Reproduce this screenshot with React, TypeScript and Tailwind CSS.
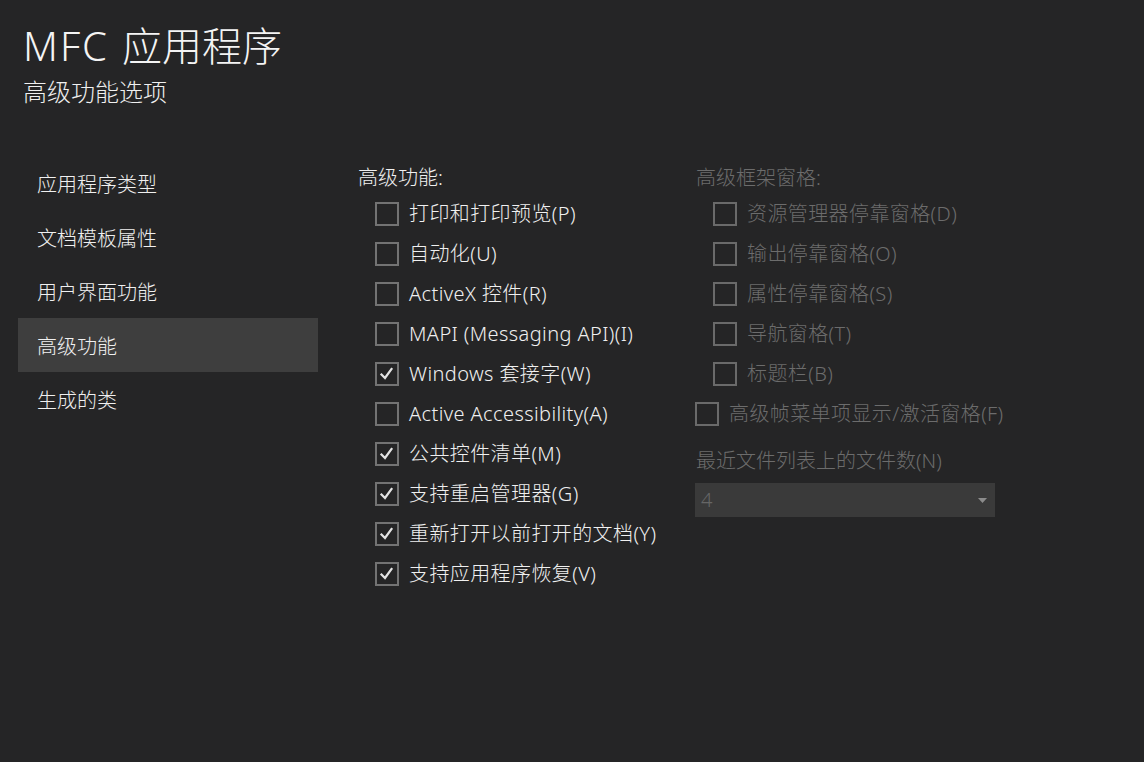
import React from "react";

const font = { fontFamily: '"Noto Sans", "Noto Sans CJK SC", sans-serif' };

function Box({ checked, disabled }: { checked?: boolean; disabled?: boolean }) {
  return (
    <div
      className={`w-[24px] h-[24px] border-2 shrink-0 flex items-center justify-center ${
        disabled ? "border-[#6a6a6a]" : "border-[#737373]"
      }`}
    >
      {checked && (
        <svg width="20" height="20" viewBox="0 0 20 20">
          <path d="M4.5 10.5 L8 14 L14.5 5" fill="none" stroke="#e4e4e4" strokeWidth="2.2" strokeLinecap="square" />
        </svg>
      )}
    </div>
  );
}

function Row({
  label,
  checked,
  disabled,
  indent = true,
}: {
  label: string;
  checked?: boolean;
  disabled?: boolean;
  indent?: boolean;
}) {
  return (
    <div className={`h-[40px] flex items-center ${indent ? "pl-[17px]" : "pl-0"}`}>
      <Box checked={checked} disabled={disabled} />
      <span
        className={`ml-[10px] text-[20px] leading-[24px] whitespace-nowrap tracking-[0.4px] ${
          disabled ? "text-[#6c6c6c]" : "text-[#f0f0f0]"
        }`}
      >
        {label}
      </span>
    </div>
  );
}

export default function App() {
  const nav = ["应用程序类型", "文档模板属性", "用户界面功能", "高级功能", "生成的类"];
  const left: [string, boolean][] = [
    ["打印和打印预览(P)", false],
    ["自动化(U)", false],
    ["ActiveX 控件(R)", false],
    ["MAPI (Messaging API)(I)", false],
    ["Windows 套接字(W)", true],
    ["Active Accessibility(A)", false],
    ["公共控件清单(M)", true],
    ["支持重启管理器(G)", true],
    ["重新打开以前打开的文档(Y)", true],
    ["支持应用程序恢复(V)", true],
  ];
  const right = ["资源管理器停靠窗格(D)", "输出停靠窗格(O)", "属性停靠窗格(S)", "导航窗格(T)", "标题栏(B)"];
  return (
    <div className="w-[1144px] h-[762px] bg-[#252526] text-[#f0f0f0] overflow-hidden font-light" style={font}>
      <div className="pt-[20px] pl-[23px]">
        <div className="text-[40px] leading-[52px] text-[#f4f4f4]">
          <span className="tracking-[2px]">MFC</span>
          <span className="ml-[13px]">应用程序</span>
        </div>
        <div className="mt-[4px] text-[24px] leading-[32px] text-[#f0f0f0]">高级功能选项</div>
      </div>
      <div className="flex mt-[48px]">
        <div className="ml-[18px] w-[300px] flex flex-col">
          {nav.map((n) => (
            <div
              key={n}
              className={`h-[54px] pl-[19px] pt-[3px] flex items-center text-[20px] ${n === "高级功能" ? "bg-[#3e3e3e]" : ""}`}
            >
              {n}
            </div>
          ))}
        </div>
        <div className="ml-[40px] w-[338px] flex flex-col">
          <div className="mt-[10px] h-[24px] text-[20px] leading-[24px] text-[#f0f0f0]">高级功能:</div>
          <div className="mt-[4px] flex flex-col">
            {left.map(([l, c]) => (
              <Row key={l} label={l} checked={c} />
            ))}
          </div>
        </div>
        <div className="flex flex-col">
          <div className="mt-[10px] h-[24px] text-[20px] leading-[24px] text-[#6c6c6c]">高级框架窗格:</div>
          <div className="mt-[4px] flex flex-col">
            {right.map((l) => (
              <Row key={l} label={l} disabled />
            ))}
            <div className="-ml-[1px]">
              <Row label="高级帧菜单项显示/激活窗格(F)" disabled indent={false} />
            </div>
          </div>
          <div className="mt-[15px] h-[24px] text-[20px] leading-[24px] text-[#6c6c6c]">最近文件列表上的文件数(N)</div>
          <div className="mt-[10px] -ml-[1px] w-[300px] h-[34px] bg-[#3a3a3a] flex items-center justify-between pl-[6px] pr-[8px]">
            <span className="text-[20px] text-[#666666]">4</span>
            <svg width="9" height="5" viewBox="0 0 9 5">
              <path d="M0 0 L9 0 L4.5 5 Z" fill="#8c8c8c" />
            </svg>
          </div>
        </div>
      </div>
    </div>
  );
}
